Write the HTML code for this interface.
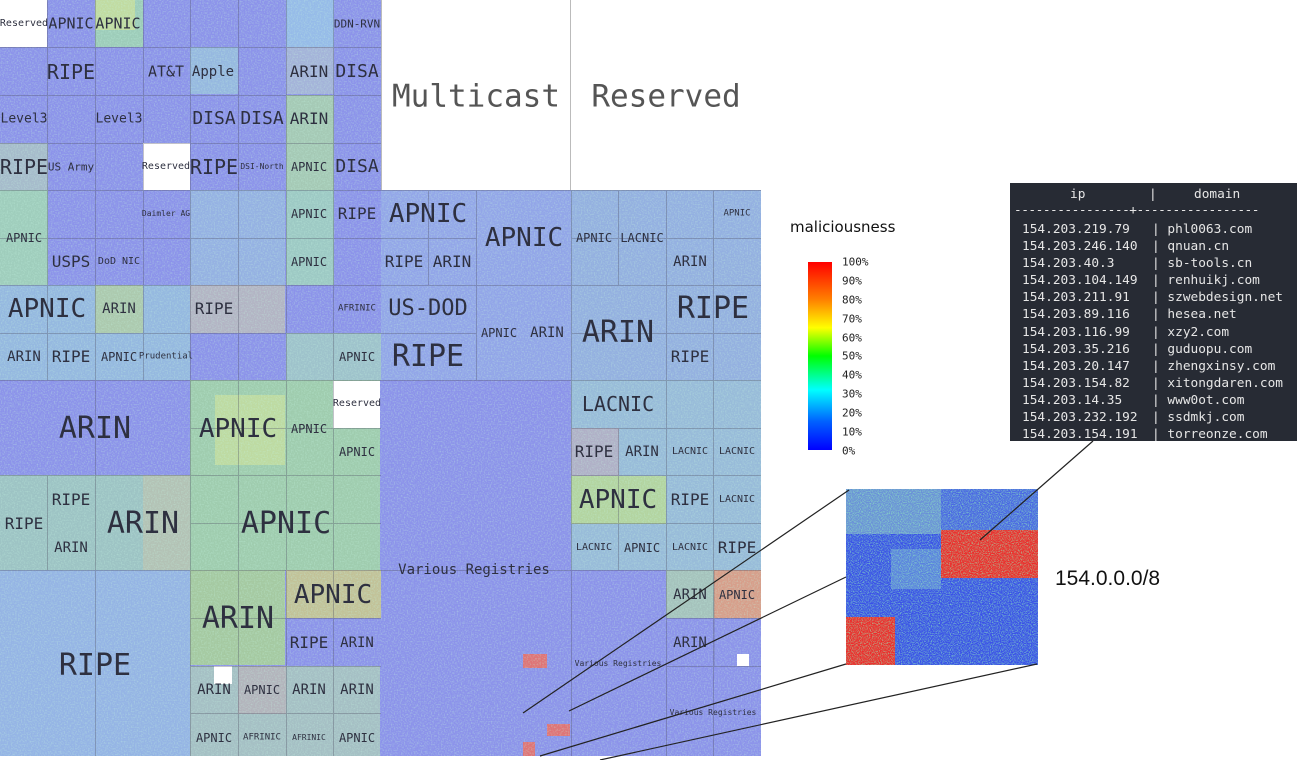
<!DOCTYPE html>
<html><head><meta charset="utf-8"><style>
body{margin:0;width:1313px;height:760px;background:#fff;position:relative;overflow:hidden;font-family:"Liberation Sans",sans-serif}
#map{position:absolute;left:0;top:0;width:761px;height:756px;background:#8c93ea;overflow:hidden}
.r{position:absolute}
.l{position:absolute;transform:translate(-50%,-50%);font-family:"DejaVu Sans Mono","Liberation Mono",monospace;color:#2e3040;white-space:nowrap;line-height:1}
.tb{position:absolute;left:1010px;top:183px;width:287px;height:258px;background:#272b34;font-family:"DejaVu Sans Mono","Liberation Mono",monospace;font-size:12.8px;color:#e6e6e6}
.tb div{position:absolute;white-space:pre}
.pc{position:absolute;left:842px;font-family:"DejaVu Sans Mono","Liberation Mono",monospace;font-size:11px;color:#222;transform:translateY(-50%)}
</style></head><body>
<div id="map">
<svg width="761" height="756" style="position:absolute;left:0;top:0">
<filter id="n"><feTurbulence type="fractalNoise" baseFrequency="0.7" numOctaves="1" seed="3"/><feColorMatrix values="0 0 0 0 0.55  0 0 0 0 0.9  0 0 0 0 0.75  2.2 0 0 0 -0.95"/></filter>
<g opacity="0.9">
<rect x="95" y="0" width="48" height="47" fill="#9fd3b4"/>
<rect x="95" y="0" width="40" height="30" fill="#c7e39a"/>
<rect x="286" y="0" width="48" height="47" fill="#98c0e8"/>
<rect x="286" y="47" width="48" height="47" fill="#a7b7d8"/>
<rect x="190" y="47" width="48" height="47" fill="#98bde0"/>
<rect x="0" y="143" width="48" height="47" fill="#a9c0c8"/>
<rect x="286" y="95" width="48" height="95" fill="#a8cfb0"/>
<rect x="0" y="190" width="48" height="95" fill="#a2d4b8"/>
<rect x="190" y="190" width="95" height="95" fill="#96b5e2"/>
<rect x="286" y="190" width="48" height="95" fill="#9fcfc0"/>
<rect x="0" y="285" width="190" height="95" fill="#96bde0"/>
<rect x="95" y="285" width="48" height="48" fill="#b0cfa8"/>
<rect x="190" y="285" width="95" height="48" fill="#b8b8c0"/>
<rect x="286" y="333" width="95" height="47" fill="#a0c8c8"/>
<rect x="190" y="380" width="190" height="190" fill="#a2d3a8"/>
<rect x="215" y="395" width="70" height="70" fill="#c4e29a"/>
<rect x="0" y="475" width="190" height="95" fill="#9fc9c0"/>
<rect x="143" y="475" width="47" height="95" fill="#b8c8b0"/>
<rect x="0" y="570" width="190" height="186" fill="#96b8e4"/>
<rect x="190" y="570" width="95" height="95" fill="#a8cf9a"/>
<rect x="286" y="570" width="95" height="48" fill="#c8c890"/>
<rect x="190" y="666" width="190" height="90" fill="#a8c4c0"/>
<rect x="238" y="666" width="48" height="48" fill="#b8b8b8"/>
<rect x="381" y="190" width="190" height="190" fill="#93a8e8"/>
<rect x="571" y="190" width="190" height="190" fill="#95b4e0"/>
<rect x="571" y="380" width="190" height="190" fill="#9ac0d8"/>
<rect x="571" y="428" width="48" height="48" fill="#b4b4c4"/>
<rect x="571" y="476" width="95" height="48" fill="#b8dc98"/>
<rect x="714" y="570" width="47" height="48" fill="#e0a080"/>
<rect x="666" y="570" width="48" height="48" fill="#a8c8b8"/>
<rect x="523" y="654" width="24" height="14" fill="#e8706a"/>
<rect x="547" y="724" width="23" height="12" fill="#e8706a"/>
<rect x="523" y="742" width="12" height="14" fill="#e8706a"/>
</g>
<rect width="761" height="756" filter="url(#n)" opacity="0.45"/>
</svg>
<div class="r" style="left:0;top:0;width:47px;height:47px;background:#fff"></div>
<div class="r" style="left:143px;top:143px;width:47px;height:47px;background:#fff"></div>
<div class="r" style="left:333px;top:381px;width:47px;height:47px;background:#fff"></div>
<div class="r" style="left:381px;top:0;width:380px;height:190px;background:#fff;border-left:1px solid #bbb;box-sizing:border-box"></div>
<div class="r" style="left:570px;top:0;width:1px;height:190px;background:#bbb"></div>
<div class="r" style="left:214px;top:666px;width:18px;height:18px;background:#fff"></div>
<div class="r" style="left:737px;top:654px;width:12px;height:12px;background:#fff"></div>
<svg width="761" height="756" style="position:absolute;left:0;top:0">
<g stroke="rgba(80,80,100,.35)" stroke-width="1">
<path d="M47.5 0V380M95.5 0V756M143.5 0V380M190.5 0V756M238.5 0V756M286.5 0V756M333.5 0V756M0 47.5H381M0 95.5H381M0 143.5H381M0 190.5H761M0 238.5H381M0 285.5H761M0 333.5H381M0 380.5H761M0 570.5H761M190 428.5H381M190 475.5H381M190 523.5H381M190 618.5H381M190 666.5H381M190 713.5H381M0 475.5H190M47.5 475V570M571.5 190V756M618.5 190V285M666.5 190V756M713.5 190V756M571 238.5H761M571 333.5H761M571 428.5H761M571 475.5H761M571 523.5H761M618.5 428V570M666 618.5H761M666 666.5H761M714 570V666M428.5 190V285M476.5 190V380M381 238.5H476M381 333.5H476"/>
</g></svg>
<div class="l" style="left:24px;top:24px;font-size:10px">Reserved</div>
<div class="l" style="left:71px;top:24px;font-size:15px">APNIC</div>
<div class="l" style="left:118px;top:24px;font-size:15px">APNIC</div>
<div class="l" style="left:357px;top:24px;font-size:11px">DDN-RVN</div>
<div class="l" style="left:71px;top:72px;font-size:20px">RIPE</div>
<div class="l" style="left:166px;top:72px;font-size:15px">AT&amp;T</div>
<div class="l" style="left:213px;top:72px;font-size:14px">Apple</div>
<div class="l" style="left:309px;top:72px;font-size:16px">ARIN</div>
<div class="l" style="left:357px;top:72px;font-size:18px">DISA</div>
<div class="l" style="left:24px;top:119px;font-size:13px">Level3</div>
<div class="l" style="left:119px;top:119px;font-size:13px">Level3</div>
<div class="l" style="left:214px;top:119px;font-size:18px">DISA</div>
<div class="l" style="left:262px;top:119px;font-size:18px">DISA</div>
<div class="l" style="left:309px;top:119px;font-size:16px">ARIN</div>
<div class="l" style="left:24px;top:167px;font-size:20px">RIPE</div>
<div class="l" style="left:71px;top:167px;font-size:11px">US Army</div>
<div class="l" style="left:166px;top:167px;font-size:10px">Reserved</div>
<div class="l" style="left:214px;top:167px;font-size:20px">RIPE</div>
<div class="l" style="left:262px;top:167px;font-size:8px">DSI-North</div>
<div class="l" style="left:309px;top:167px;font-size:12px">APNIC</div>
<div class="l" style="left:357px;top:167px;font-size:18px">DISA</div>
<div class="l" style="left:476px;top:97px;font-size:31px;color:#555">Multicast</div>
<div class="l" style="left:666px;top:97px;font-size:31px;color:#555">Reserved</div>
<div class="l" style="left:24px;top:238px;font-size:12px">APNIC</div>
<div class="l" style="left:166px;top:214px;font-size:8px">Daimler AG</div>
<div class="l" style="left:309px;top:214px;font-size:12px">APNIC</div>
<div class="l" style="left:357px;top:214px;font-size:16px">RIPE</div>
<div class="l" style="left:428px;top:214px;font-size:26px">APNIC</div>
<div class="l" style="left:524px;top:238px;font-size:26px">APNIC</div>
<div class="l" style="left:594px;top:238px;font-size:12px">APNIC</div>
<div class="l" style="left:642px;top:238px;font-size:12px">LACNIC</div>
<div class="l" style="left:737px;top:214px;font-size:9px">APNIC</div>
<div class="l" style="left:71px;top:262px;font-size:16px">USPS</div>
<div class="l" style="left:119px;top:262px;font-size:10px">DoD NIC</div>
<div class="l" style="left:309px;top:262px;font-size:12px">APNIC</div>
<div class="l" style="left:404px;top:262px;font-size:16px">RIPE</div>
<div class="l" style="left:452px;top:262px;font-size:16px">ARIN</div>
<div class="l" style="left:690px;top:262px;font-size:14px">ARIN</div>
<div class="l" style="left:47px;top:309px;font-size:26px">APNIC</div>
<div class="l" style="left:119px;top:309px;font-size:14px">ARIN</div>
<div class="l" style="left:214px;top:309px;font-size:16px">RIPE</div>
<div class="l" style="left:357px;top:309px;font-size:9px">AFRINIC</div>
<div class="l" style="left:428px;top:309px;font-size:22px">US-DOD</div>
<div class="l" style="left:499px;top:333px;font-size:12px">APNIC</div>
<div class="l" style="left:547px;top:333px;font-size:14px">ARIN</div>
<div class="l" style="left:618px;top:333px;font-size:30px">ARIN</div>
<div class="l" style="left:713px;top:309px;font-size:30px">RIPE</div>
<div class="l" style="left:24px;top:357px;font-size:14px">ARIN</div>
<div class="l" style="left:71px;top:357px;font-size:16px">RIPE</div>
<div class="l" style="left:119px;top:357px;font-size:12px">APNIC</div>
<div class="l" style="left:166px;top:357px;font-size:9px">Prudential</div>
<div class="l" style="left:357px;top:357px;font-size:12px">APNIC</div>
<div class="l" style="left:428px;top:357px;font-size:30px">RIPE</div>
<div class="l" style="left:690px;top:357px;font-size:16px">RIPE</div>
<div class="l" style="left:95px;top:429px;font-size:30px">ARIN</div>
<div class="l" style="left:238px;top:429px;font-size:26px">APNIC</div>
<div class="l" style="left:309px;top:429px;font-size:12px">APNIC</div>
<div class="l" style="left:357px;top:404px;font-size:10px">Reserved</div>
<div class="l" style="left:357px;top:452px;font-size:12px">APNIC</div>
<div class="l" style="left:618px;top:404px;font-size:20px">LACNIC</div>
<div class="l" style="left:71px;top:500px;font-size:16px">RIPE</div>
<div class="l" style="left:24px;top:524px;font-size:16px">RIPE</div>
<div class="l" style="left:143px;top:524px;font-size:30px">ARIN</div>
<div class="l" style="left:286px;top:524px;font-size:30px">APNIC</div>
<div class="l" style="left:594px;top:452px;font-size:16px">RIPE</div>
<div class="l" style="left:642px;top:452px;font-size:14px">ARIN</div>
<div class="l" style="left:690px;top:452px;font-size:10px">LACNIC</div>
<div class="l" style="left:737px;top:452px;font-size:10px">LACNIC</div>
<div class="l" style="left:618px;top:500px;font-size:26px">APNIC</div>
<div class="l" style="left:690px;top:500px;font-size:16px">RIPE</div>
<div class="l" style="left:737px;top:500px;font-size:10px">LACNIC</div>
<div class="l" style="left:71px;top:548px;font-size:14px">ARIN</div>
<div class="l" style="left:474px;top:570px;font-size:14px">Various Registries</div>
<div class="l" style="left:594px;top:548px;font-size:10px">LACNIC</div>
<div class="l" style="left:642px;top:548px;font-size:12px">APNIC</div>
<div class="l" style="left:690px;top:548px;font-size:10px">LACNIC</div>
<div class="l" style="left:737px;top:548px;font-size:16px">RIPE</div>
<div class="l" style="left:95px;top:666px;font-size:30px">RIPE</div>
<div class="l" style="left:238px;top:619px;font-size:30px">ARIN</div>
<div class="l" style="left:333px;top:595px;font-size:26px">APNIC</div>
<div class="l" style="left:309px;top:643px;font-size:16px">RIPE</div>
<div class="l" style="left:357px;top:643px;font-size:14px">ARIN</div>
<div class="l" style="left:690px;top:595px;font-size:14px">ARIN</div>
<div class="l" style="left:737px;top:595px;font-size:12px">APNIC</div>
<div class="l" style="left:690px;top:643px;font-size:14px">ARIN</div>
<div class="l" style="left:618px;top:664px;font-size:8px">Various Registries</div>
<div class="l" style="left:713px;top:713px;font-size:8px">Various Registries</div>
<div class="l" style="left:214px;top:690px;font-size:14px">ARIN</div>
<div class="l" style="left:262px;top:690px;font-size:12px">APNIC</div>
<div class="l" style="left:309px;top:690px;font-size:14px">ARIN</div>
<div class="l" style="left:357px;top:690px;font-size:14px">ARIN</div>
<div class="l" style="left:214px;top:738px;font-size:12px">APNIC</div>
<div class="l" style="left:262px;top:738px;font-size:9px">AFRINIC</div>
<div class="l" style="left:309px;top:738px;font-size:8px">AFRINIC</div>
<div class="l" style="left:357px;top:738px;font-size:12px">APNIC</div>
</div>

<div style="position:absolute;left:790px;top:218px;font-size:15px;color:#111;font-family:'DejaVu Sans','Liberation Sans',sans-serif">maliciousness</div>
<div style="position:absolute;left:808px;top:262px;width:24px;height:188px;background:linear-gradient(#ff0000,#ff8000 20%,#ffff00 35%,#00ff00 50%,#00ffff 68%,#0060ff 85%,#0000ff)"></div>
<div class="pc" style="top:262px">100%</div>
<div class="pc" style="top:281px">90%</div>
<div class="pc" style="top:300px">80%</div>
<div class="pc" style="top:319px">70%</div>
<div class="pc" style="top:338px">60%</div>
<div class="pc" style="top:356px">50%</div>
<div class="pc" style="top:375px">40%</div>
<div class="pc" style="top:394px">30%</div>
<div class="pc" style="top:413px">20%</div>
<div class="pc" style="top:432px">10%</div>
<div class="pc" style="top:451px">0%</div>

<div class="tb">
<div style="left:60px;top:4px">ip</div><div style="left:139px;top:4px">|</div><div style="left:184px;top:4px">domain</div>
<div style="left:4px;top:20px;letter-spacing:-0.5px">----------------+-----------------</div>
<div style="left:12px;top:38px;line-height:17.1px">154.203.219.79
154.203.246.140
154.203.40.3
154.203.104.149
154.203.211.91
154.203.89.116
154.203.116.99
154.203.35.216
154.203.20.147
154.203.154.82
154.203.14.35
154.203.232.192
154.203.154.191</div>
<div style="left:142px;top:38px;line-height:17.1px">| phl0063.com
| qnuan.cn
| sb-tools.cn
| renhuikj.com
| szwebdesign.net
| hesea.net
| xzy2.com
| guduopu.com
| zhengxinsy.com
| xitongdaren.com
| www0ot.com
| ssdmkj.com
| torreonze.com</div>
</div>

<svg width="192" height="176" style="position:absolute;left:846px;top:489px">
<filter id="n2"><feTurbulence type="fractalNoise" baseFrequency="0.9" numOctaves="1" seed="7"/><feColorMatrix values="0 0 0 0 0.3  0 0 0 0 0.9  0 0 0 0 0.5  2.4 0 0 0 -1.0"/></filter>
<rect width="192" height="176" fill="#3a50e8"/>
<rect x="0" y="0" width="95" height="45" fill="#6a90d8"/>
<rect x="45" y="60" width="50" height="40" fill="#5a80e0"/>
<rect x="95" y="41" width="97" height="48" fill="#ee2a2a"/>
<rect x="0" y="128" width="49" height="48" fill="#ee2a2a"/>
<rect x="95" y="0" width="97" height="41" fill="#4a66e4"/>
<rect width="192" height="176" filter="url(#n2)" opacity="0.8"/>
</svg>
<div style="position:absolute;left:1055px;top:567px;font-size:21px;color:#111">154.0.0.0/8</div>

<svg width="1313" height="760" style="position:absolute;left:0;top:0">
<g stroke="#222" stroke-width="1.2">
<line x1="523" y1="713" x2="849" y2="490"/>
<line x1="569" y1="711" x2="846" y2="577"/>
<line x1="540" y1="756" x2="846" y2="664"/>
<line x1="600" y1="760" x2="1037" y2="664"/>
<line x1="1093" y1="441" x2="980" y2="540"/>
</g></svg>
</body></html>
